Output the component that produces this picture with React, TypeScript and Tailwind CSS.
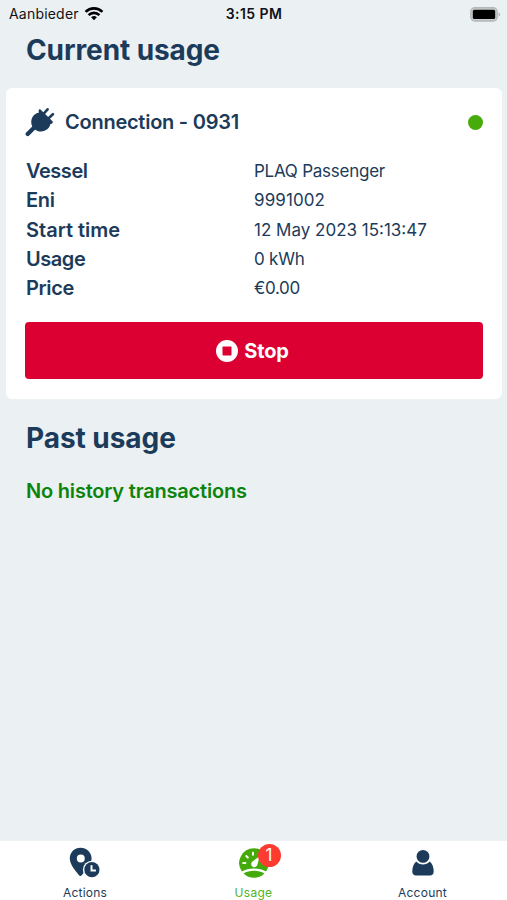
import React from "react";

const details = [
  { label: "Vessel", value: "PLAQ Passenger", labelTrack: "tracking-[-0.450px]", track: "tracking-[-0.250px]" },
  { label: "Eni", value: "9991002", labelTrack: "tracking-[-0.250px]", track: "tracking-[0.100px]" },
  { label: "Start time", value: "12 May 2023 15:13:47", labelTrack: "tracking-[0px]", track: "tracking-[0px]" },
  { label: "Usage", value: "0 kWh", labelTrack: "tracking-[-0.450px]", track: "tracking-[-0.200px]" },
  { label: "Price", value: "€0.00", labelTrack: "tracking-[-0.350px]", track: "tracking-[-0.350px]" },
];

function WifiIcon() {
  return (
    <svg width="20" height="14" viewBox="0 0 20 14" fill="none" stroke="#000" strokeWidth="2.7">
      <path d="M1.6 4.9a12 12 0 0 1 16.8 0" />
      <path d="M4.6 8.1a7.7 7.7 0 0 1 10.8 0" />
      <path d="M10 13.3 7.1 10.3a4.2 4.2 0 0 1 5.8 0z" fill="#000" stroke="none" />
    </svg>
  );
}

function BatteryIcon() {
  return (
    <svg width="31" height="15" viewBox="0 0 31 15">
      <rect x="0.8" y="0.8" width="26.4" height="13.2" rx="4" fill="#c9cccd" stroke="#b4b7b9" strokeWidth="1.4" />
      <rect x="2.8" y="2.8" width="22.4" height="9.2" rx="1.6" fill="#000" />
      <path d="M28.6 5.2c2 .8 2 3.600 0 4.400z" fill="#aeb1b3" />
    </svg>
  );
}

function PlugIcon() {
  return (
    <svg width="30" height="30" viewBox="0 0 30 30" fill="#1c3b5a">
      <g stroke="#1c3b5a" strokeLinecap="round">
        <path d="M18.500 6.800 22.600 2.300M23.200 11.600 27.900 7.200" strokeWidth="2.600" />
        <path d="M2.700 27.100 11 18.800" strokeWidth="4.200" />
      </g>
      <path d="M14 2.600c.6-.5 1.200-.4 1.700.1L27.500 14.300c.5.500.5 1.100 0 1.600l-.9.900c-.4.400-.8.400-1.300.2-.3 2.200-1.200 3.700-2.800 5.100-3.800 3.400-9.900 3.200-13.500-.4-3.500-3.500-3.700-9.500-.4-13.200 1.400-1.600 3.100-2.500 5.300-2.800-.4-.5-.4-1.100-.2-1.700z" />
    </svg>
  );
}

function StopIcon() {
  return (
    <svg width="22" height="22" viewBox="0 0 22 22">
      <circle cx="11" cy="11" r="11" fill="#fff" />
      <rect x="6.500" y="6.500" width="9" height="9" rx="0.800" fill="#dc0032" />
    </svg>
  );
}

function LocationClockIcon() {
  return (
    <svg width="32" height="32" viewBox="0 0 32 32">
      <path fillRule="evenodd" d="M11.500.7C5.500.7.8 5.400.8 11.300c0 6.200 5.200 11.800 9.200 17 .7.900 2 .9 2.700 0 4.500-5.400 9.900-10.900 9.900-17C22.600 5.400 17.500.7 11.500.7zm.3 6.800a4 4 0 1 1 0 8 4 4 0 0 1 0-8z" fill="#1c3b5a" />
      <circle cx="22.900" cy="22.700" r="9" fill="#fff" />
      <circle cx="22.900" cy="22.700" r="7.600" fill="#1c3b5a" />
      <path d="M22.500 18.300v5.200h4.400" fill="none" stroke="#fff" strokeWidth="2" />
    </svg>
  );
}

function GaugeIcon() {
  return (
    <svg width="30" height="30" viewBox="0 0 30 30">
      <path d="M15 .2a14.800 14.800 0 0 0-12.100 23.300C6.200 21.500 10.300 20.500 15 20.500s8.800 1 12.100 3A14.800 14.800 0 0 0 15 .2z" fill="#43aa0a" />
      <path d="M4.600 25.500C7.300 23.800 11 22.800 15 22.800s7.700 1 10.400 2.700A14.800 14.800 0 0 1 15 29.800c-4.100 0-7.800-1.600-10.400-4.300z" fill="#43aa0a" />
      <g stroke="#fff" strokeWidth="2" strokeLinecap="round">
        <path d="M4.200 15h2.200M7.300 8 8.800 9.500M14 4.700v2" />
        <path d="M23.800 15H26" />
      </g>
      <path d="M20.800 8.200 18.500 16.200a3.200 3.200 0 1 1-4.800-3z" fill="#fff" />
    </svg>
  );
}

function PersonIcon() {
  return (
    <svg width="22" height="26" viewBox="0 0 22 26" fill="#1c3b5a">
      <circle cx="11" cy="6.400" r="6.400" />
      <path d="M4.300 11.500c1.600 1.900 4 3 6.700 3s5.100-1.100 6.700-3c2.500 1.700 4 5.500 4 9.900 0 2.600-1.500 4.100-3.700 4.100H4C1.800 25.500.3 24 .3 21.400c0-4.400 1.500-8.200 4-9.900z" />
    </svg>
  );
}

export default function App() {
  return (
    <div className="flex h-[900px] w-[507px] flex-col overflow-hidden bg-[#ebf0f3] font-['Inter','Liberation_Sans',sans-serif] text-[#1c3b5a]">
      <header className="grid h-7 grid-cols-3 items-center pl-[9px] pr-[6px] text-sm leading-none text-[#101214]">
        <div className="flex items-center gap-[5px]">
          <span className="tracking-[0.200px]">Aanbieder</span>
          <WifiIcon />
        </div>
        <span className="pr-[2px] text-center font-semibold tracking-[0.450px]">3:15 PM</span>
        <div className="flex justify-end">
          <BatteryIcon />
        </div>
      </header>

      <main className="flex flex-1 flex-col">
        <h1 className="mt-1 h-14 pl-[26px] text-[28px] font-[650] leading-9 tracking-[-0.100px]">Current usage</h1>

        <section className="ml-[6px] mr-[5px] flex h-[311px] flex-col rounded-[6px] bg-white px-[19px] pt-[19px]">
          <div className="flex h-[30px] items-center">
            <PlugIcon />
            <h2 className="ml-[10px] flex-1 text-[20px] font-semibold tracking-[-0.250px]">Connection - 0931</h2>
            <span className="size-[15px] rounded-full bg-[#47ab0c]" />
          </div>

          <dl className="mt-[19.400px]">
            {details.map((d) => (
              <div key={d.label} className="grid h-[29.300px] grid-cols-2 items-center">
                <dt className={`pl-px text-[20px] font-semibold leading-none ${d.labelTrack}`}>{d.label}</dt>
                <dd className={`pt-px text-[17px] leading-none ${d.track}`}>{d.value}</dd>
              </div>
            ))}
          </dl>

          <button className="mt-[19.600px] flex h-[57px] items-center justify-center gap-[6px] rounded-[4px] bg-[#dc0032] pr-[3px] text-[20px] font-bold tracking-[-0.200px] text-white">
            <StopIcon />
            Stop
          </button>
        </section>

        <h1 className="mt-[21px] pl-[26px] text-[28px] font-[650] leading-9 tracking-[-0.050px]">Past usage</h1>
        <p className="mt-[21px] pl-[26px] text-[20px] font-semibold leading-7 tracking-[-0.200px] text-[#0c840c]">No history transactions</p>
      </main>

      <nav className="grid h-[59px] grid-cols-3 bg-white text-[12px] leading-none">
        <div className="flex flex-col items-center pl-px pt-[6px]">
          <LocationClockIcon />
          <span className="mt-[8px] tracking-[0.200px]">Actions</span>
        </div>
        <div className="flex flex-col items-center pt-[7px] text-[#52b423]">
          <div className="relative">
            <GaugeIcon />
            <span className="absolute -top-[4px] left-[19px] flex size-[23px] items-center justify-center rounded-full bg-[#fe3b30] text-[17px] text-white">1</span>
          </div>
          <span className="mt-[9px] tracking-[0.300px]">Usage</span>
        </div>
        <div className="flex flex-col items-center pt-[9px]">
          <PersonIcon />
          <span className="mt-[11px] tracking-[0.250px]">Account</span>
        </div>
      </nav>
    </div>
  );
}
